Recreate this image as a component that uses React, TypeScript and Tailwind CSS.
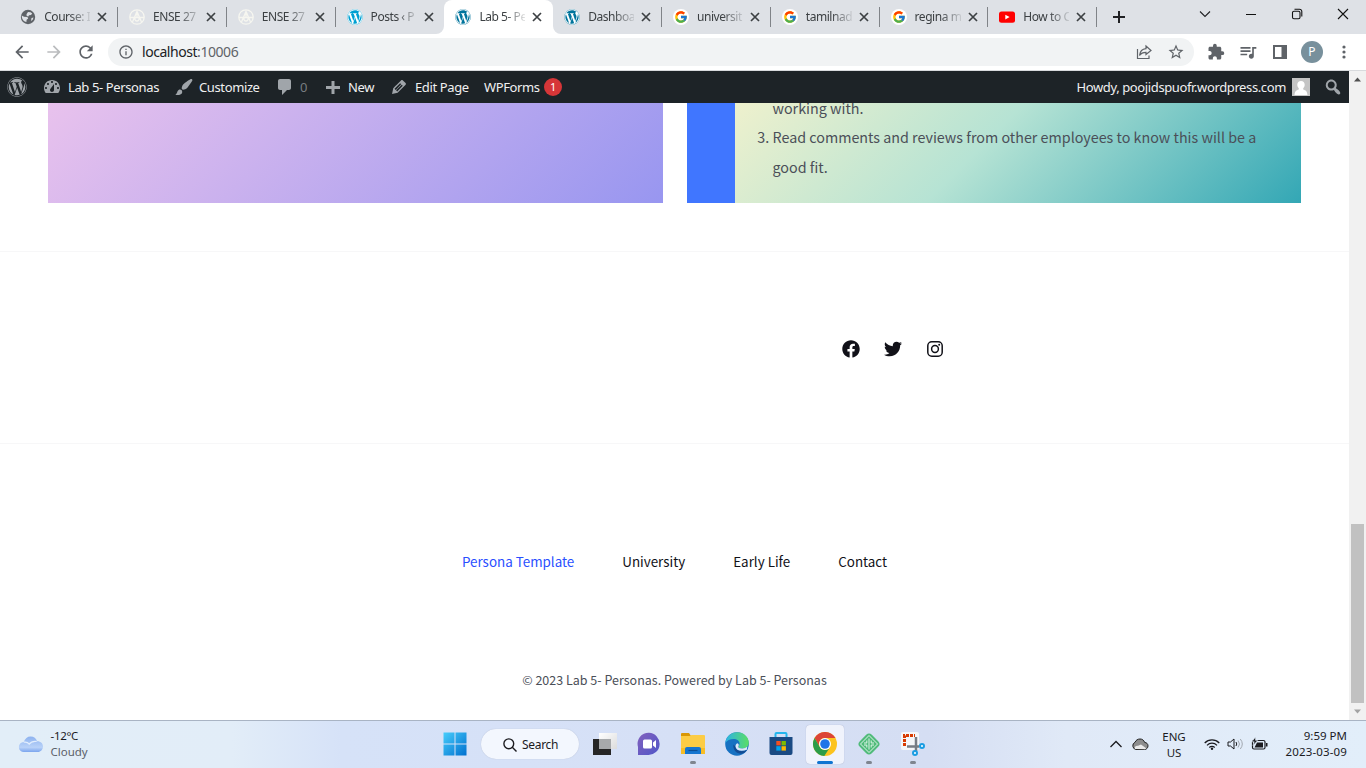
import type { ReactNode } from "react";
import { FaFacebook, FaTwitter, FaWordpress } from "react-icons/fa";
import { FcGoogle } from "react-icons/fc";
import { MdArrowBack, MdArrowForward, MdExtension, MdOutlineInfo, MdQueueMusic, MdRefresh, MdStarBorder } from "react-icons/md";

const uiFont = "font-['Noto_Sans','Open_Sans',sans-serif]";
const pageFont = "font-['Noto_Sans_CJK_SC',sans-serif]";

/* ---------- browser tabs ---------- */

function Globe() {
  return (
    <svg viewBox="0 0 16 16" className="size-4">
      <circle cx="8" cy="8" r="7.2" fill="#5f6368" />
      <path d="M1.8 6.5 4 7.700l3.400.4.8 1.500-1.600 1.100-.2 2.300-1.700-.5C2.800 11.500 1.500 9 1.800 6.500zM8 3l2.600.2 1.600 1.300-1.200 1.500-2 .2-.7 1.200-1.600-.5-.2-1.700zM11.500 9l2-.6-.8 2.400-1.700 1.200z" fill="#dee1e6" />
    </svg>
  );
}

function Moodle() {
  return (
    <svg viewBox="0 0 16 16" className="size-4" fill="none" stroke="#f6f6f0" strokeWidth="1.3">
      <circle cx="8" cy="8" r="7.2" />
      <path d="M3.500 13 8 2.500 12.500 13M1 8.500h14M8 2.500v6M5.700 8.500a2.300 3.500 0 0 0 4.600 0" />
    </svg>
  );
}

function WpIcon({ light }: { light?: boolean }) {
  return (
    <span className="flex size-4 items-center justify-center rounded-full bg-white">
      <FaWordpress className={light ? "size-4 text-[#00a0d2]" : "size-4 text-[#00749c]"} />
    </span>
  );
}

function GoogleIcon() {
  return (
    <span className="flex size-4 items-center justify-center rounded-full bg-white">
      <FcGoogle className="size-[14px]" />
    </span>
  );
}

function YoutubeIcon() {
  return (
    <svg viewBox="0 0 16 16" className="size-4">
      <rect y="2.500" width="16" height="11.300" rx="2.500" fill="#f00" />
      <path d="m6.300 5.700 4.300 2.400-4.300 2.400z" fill="#fff" />
    </svg>
  );
}

function Cross() {
  return (
    <svg viewBox="0 0 10 10" className="size-[10px]" stroke="#3c4043" strokeWidth="1.700">
      <path d="m1 1 8 8M9 1 1 9" />
    </svg>
  );
}

type Tab = { title: string; icon: ReactNode; active?: boolean; sep?: boolean };

const tabs: Tab[] = [
  { title: "Course: I", icon: <Globe />, sep: true },
  { title: "ENSE 27", icon: <Moodle />, sep: true },
  { title: "ENSE 27", icon: <Moodle />, sep: true },
  { title: "Posts ‹ P", icon: <WpIcon light /> },
  { title: "Lab 5- Pe", icon: <WpIcon />, active: true },
  { title: "Dashboa", icon: <WpIcon />, sep: true },
  { title: "universit", icon: <GoogleIcon />, sep: true },
  { title: "tamilnad", icon: <GoogleIcon />, sep: true },
  { title: "regina m", icon: <GoogleIcon />, sep: true },
  { title: "How to C", icon: <YoutubeIcon />, sep: true },
];

function TabStrip() {
  return (
    <div className="flex h-[34px] bg-[#dee1e6] pl-[9.2px]">
      {tabs.map((t, i) => (
        <div key={i} className={`relative flex h-[34px] w-[108.8px] shrink-0 items-center pl-[11px] ${t.active ? "rounded-t-lg bg-white" : ""}`}>
          {t.active && (
            <>
              <svg viewBox="0 0 8 8" className="absolute bottom-0 -left-2 size-2" fill="#fff">
                <path d="M8 0v8H0a8 8 0 0 0 8-8z" />
              </svg>
              <svg viewBox="0 0 8 8" className="absolute -right-2 bottom-0 size-2" fill="#fff">
                <path d="M0 0v8h8a8 8 0 0 1-8-8z" />
              </svg>
            </>
          )}
          {t.icon}
          <span className="ml-2 w-[46px] text-[12px] tracking-[-0.45px] whitespace-nowrap text-[#3c4043] [mask-image:linear-gradient(to_right,black_55%,#0002_100%)]">
            {t.title}
          </span>
          <span className="ml-[7px]">
            <Cross />
          </span>
          {t.sep && <span className="absolute top-[7px] right-0 h-5 w-px bg-[#808388]" />}
        </div>
      ))}
      <svg viewBox="0 0 12 12" className="mt-[11px] ml-[16px] size-3" stroke="#202124" strokeWidth="2">
        <path d="M6 0v12M0 6h12" />
      </svg>
      <div className="ml-auto flex items-start gap-[34px] pt-[8px] pr-[17px]">
        <svg viewBox="0 0 12 12" className="size-3" fill="none" stroke="#202124" strokeWidth="1.1">
          <path d="m1 3.500 5 5 5-5" />
        </svg>
        <svg viewBox="0 0 12 12" className="size-3" stroke="#111" strokeWidth="1">
          <path d="M1 6.500h10" />
        </svg>
        <svg viewBox="0 0 12 12" className="size-3" fill="none" stroke="#111" strokeWidth="1.1">
          <rect x="1.500" y="3.300" width="7.500" height="7.500" rx="1.500" />
          <path d="M3.500 1.300H8.500a2.300 2.300 0 0 1 2.300 2.300v5" />
        </svg>
        <svg viewBox="0 0 12 12" className="size-3" stroke="#111" strokeWidth="1.1">
          <path d="m1 1 10 10M11 1 1 11" />
        </svg>
      </div>
    </div>
  );
}

function Toolbar() {
  return (
    <div className="flex h-[37px] items-center border-b border-[#d8dadd] bg-white pl-[12px]">
      <MdArrowBack className="size-5 text-[#5f6368]" />
      <MdArrowForward className="ml-3 size-5 text-[#babcbe]" />
      <MdRefresh className="ml-3 size-5 text-[#5f6368]" />
      <div className="ml-3 flex h-7 w-[1086px] items-center rounded-full bg-[#f1f3f4] pl-[10px]">
        <MdOutlineInfo className="size-4 text-[#5f6368]" />
        <span className="ml-2 pb-px text-[14px] leading-5 tracking-[-0.45px] text-[#202124]">
          localhost<span className="text-[#5f6368]">:10006</span>
        </span>
        <svg viewBox="0 0 16 16" className="ml-auto size-4" fill="none" stroke="#5f6368" strokeWidth="1.2">
          <path d="M1.500 5v9.500H13v-3M10 2l5 4.500-5 4V8.300C7 8.300 5 9 3.500 11.500 4 7.500 6.500 5 10 4.700z" />
        </svg>
        <MdStarBorder className="mr-[9px] ml-[15px] size-[18px] text-[#5f6368]" />
      </div>
      <MdExtension className="ml-[13px] size-[18px] text-[#5f6368]" />
      <MdQueueMusic className="ml-[13px] size-5 text-[#5f6368]" />
      <svg viewBox="0 0 14 14" className="ml-[15px] size-[14px]">
        <path d="M0 0h14v14H0zM2 2v10h6.500V2z" fillRule="evenodd" fill="#5f6368" />
      </svg>
      <span className="ml-[14px] flex size-[22px] items-center justify-center rounded-full bg-[#78909c] text-[12px] text-white">P</span>
      <svg viewBox="0 0 4 14" className="ml-[19px] h-[14px] w-1" fill="#5f6368">
        <circle cx="2" cy="2" r="1.600" />
        <circle cx="2" cy="7" r="1.600" />
        <circle cx="2" cy="12" r="1.600" />
      </svg>
    </div>
  );
}

/* ---------- WordPress admin bar ---------- */

const dash = {
  dashboard:
    "M3.760 16h12.480c1.100-1.370 1.760-3.110 1.760-5 0-4.420-3.580-8-8-8s-8 3.580-8 8c0 1.890.66 3.630 1.760 5zM10 4c.55 0 1 .45 1 1s-.45 1-1 1-1-.45-1-1 .45-1 1-1zM6 6c.55 0 1 .45 1 1s-.45 1-1 1-1-.45-1-1 .45-1 1-1zm8 0c.55 0 1 .45 1 1s-.45 1-1 1-1-.45-1-1 .45-1 1-1zm-5.370 5.550L12 7v6c0 1.100-.9 2-2 2s-2-.9-2-2c0-.57.24-1.080.63-1.450zM4 10c.55 0 1 .45 1 1s-.45 1-1 1-1-.45-1-1 .45-1 1-1zm12 0c.55 0 1 .45 1 1s-.45 1-1 1-1-.45-1-1 .45-1 1-1z",
  brush:
    "M18.330 3.570s.27-.8-.31-1.360c-.53-.52-1.220-.24-1.220-.24-.61.3-5.760 3.470-7.670 5.570-.86.96-2.060 3.790-1.090 4.820.92.98 3.960-.17 4.790-1 2.060-2.060 5.210-7.170 5.500-7.790zM1.400 17.650c2.370-1.560 1.460-3.410 3.230-4.640.93-.65 2.220-.62 3.080.29.63.67.8 2.570-.16 3.460-1.570 1.450-4 1.550-6.150.89z",
  comment: "M5 2h9c1.100 0 2 .9 2 2v7c0 1.100-.9 2-2 2h-2l-5 5v-5H5c-1.100 0-2-.9-2-2V4c0-1.100.9-2 2-2z",
  plus: "M17 9v3h-5.500v5h-3v-5H3V9h5.500V4h3v5z",
  edit: "M13.890 3.390l2.710 2.720c.46.46.42 1.240.03 1.640l-8.010 8.020-5.560 1.160 1.160-5.580s7.600-7.630 7.990-8.030c.39-.39 1.220-.39 1.680.07zm-2.730 2.790l-5.590 5.610 1.110 1.110 5.540-5.650zm-2.970 8.230l5.580-5.600-1.070-1.080-5.590 5.600z",
  search:
    "M12.140 4.180c1.870 1.870 2.110 4.750.72 6.890.12.1.22.21.36.31.2.16.47.36.81.59.34.24.56.39.66.47.42.31.73.57.94.78.32.32.6.65.84 1 .25.35.44.69.59 1.040.14.35.21.68.18 1-.02.32-.14.59-.36.81s-.49.34-.81.36c-.31.02-.65-.04-.99-.19-.35-.14-.7-.34-1.040-.59-.35-.24-.68-.52-1-.84-.21-.21-.47-.52-.77-.93-.1-.13-.25-.35-.47-.66-.22-.32-.4-.57-.56-.78-.16-.2-.29-.35-.44-.5-2.070 1.090-4.690.76-6.440-.98-2.140-2.150-2.140-5.640 0-7.780 2.150-2.150 5.630-2.150 7.780 0zm-1.410 6.360c1.360-1.370 1.360-3.580 0-4.950-1.370-1.370-3.590-1.370-4.950 0-1.370 1.370-1.370 3.580 0 4.950 1.360 1.370 3.580 1.370 4.950 0z",
};

function Dashicon({ d }: { d: string }) {
  return (
    <svg viewBox="0 0 20 20" className="size-5 shrink-0" fill="#a0a5aa">
      <path d={d} />
    </svg>
  );
}

function AdminBar() {
  return (
    <div className="flex h-8 w-[1349px] items-center bg-[#1d2327] pl-[7px] text-[13px] leading-5 tracking-[-0.38px] whitespace-nowrap text-[#f0f0f1]">
      <FaWordpress className="size-5 text-[#a0a5aa]" />
      <div className="ml-[15px] flex w-[132px] items-center gap-[6px]">
        <Dashicon d={dash.dashboard} />
        <span>Lab 5- Personas</span>
      </div>
      <div className="flex w-[101px] items-center gap-[5px]">
        <Dashicon d={dash.brush} />
        <span>Customize</span>
      </div>
      <div className="flex w-[48px] items-center gap-[5px] text-[#a0a5aa]/70">
        <Dashicon d={dash.comment} />
        <span>0</span>
      </div>
      <div className="flex w-[66px] items-center gap-[5px]">
        <Dashicon d={dash.plus} />
        <span>New</span>
      </div>
      <div className="flex w-[95px] items-center gap-[6px]">
        <Dashicon d={dash.edit} />
        <span>Edit Page</span>
      </div>
      <span className="w-[60px]">WPForms</span>
      <span className="flex size-[18px] items-center justify-center rounded-full bg-[#d63638] text-[11px] text-white">1</span>
      <span className="ml-auto">Howdy, poojidspuofr.wordpress.com</span>
      <svg viewBox="0 0 18 18" className="ml-[6px] size-[18px]">
        <path d="M0 0h18v18H0z" fill="#c4c4c4" />
        <path d="M9 3c2.300 0 3.700 1.500 3.700 3.700 0 1.500-.6 2.800-1.500 3.500v1.300c2.500.7 4 1.800 4.300 5.500h-13c.3-3.700 1.800-4.800 4.300-5.500v-1.300C5.900 9.500 5.300 8.200 5.300 6.700 5.300 4.500 6.700 3 9 3z" fill="#fff" />
      </svg>
      <span className="mr-[6px] ml-[13px]">
        <Dashicon d={dash.search} />
      </span>
    </div>
  );
}

/* ---------- page ---------- */

function Page() {
  return (
    <main className={`h-[617px] w-[1349px] overflow-hidden bg-white ${pageFont}`}>
      <section className="flex h-[148px] items-end gap-6 overflow-hidden px-12 pb-12">
        <div className="h-[300px] w-[615px] bg-[linear-gradient(135deg,rgb(255,206,236)_0%,rgb(152,150,240)_100%)]" />
        <div className="flex h-[186px] w-[614px] bg-[#4076ff] pl-12">
          <div className="flex flex-1 flex-col justify-end bg-[linear-gradient(135deg,rgb(255,245,203)_0%,rgb(182,227,212)_50%,rgb(51,167,181)_100%)] pb-[21px] pl-[37.5px] text-[14.32px] leading-[30px] whitespace-nowrap text-[#4b4f58]">
            <p className="leading-[29px]">working with.</p>
            <ol start={3} className="list-decimal">
              <li>
                Read comments and reviews from other employees to know this will be a
                <br />
                good fit.
              </li>
            </ol>
          </div>
        </div>
      </section>
      <section className="flex h-[192px] items-center border-t border-[#f7f7f8] pl-[842px] text-[#111118]">
        <FaFacebook className="mt-[3px] size-[18px]" />
        <FaTwitter className="mt-[3px] ml-6 size-[18px]" />
        <svg viewBox="0 0 18 18" className="mt-[3px] ml-6 size-[18px]" fill="none" stroke="currentColor" strokeWidth="1.500">
          <rect x="1.800" y="1.800" width="14.400" height="14.400" rx="4" />
          <circle cx="9" cy="9" r="3.400" />
          <circle cx="13.200" cy="4.800" r="1" fill="currentColor" stroke="none" />
        </svg>
      </section>
      <footer className="flex flex-col items-center border-t border-[#f7f7f8] pt-[105px]">
        <nav className="flex gap-12 text-[13.4px] leading-6 text-[#111118]">
          <a className="text-[#2a4fff]">Persona Template</a>
          <a>University</a>
          <a>Early Life</a>
          <a>Contact</a>
        </nav>
        <p className="mt-[95px] text-[12.5px] leading-6 text-[#4b4f58]">© 2023 Lab 5- Personas. Powered by Lab 5- Personas</p>
      </footer>
    </main>
  );
}

function Scrollbar() {
  return (
    <div className="flex w-[17px] flex-col items-center justify-between bg-[#f1f1f1]">
      <svg viewBox="0 0 17 17" className="size-[17px]">
        <path d="m5 10.500 3.500-4 3.500 4z" fill="#505050" />
      </svg>
      <div className="flex flex-col items-center">
        <div className="h-[179px] w-[13px] bg-[#c1c1c1]" />
        <svg viewBox="0 0 17 17" className="size-[17px]">
          <path d="m5 6.500 3.500 4 3.500-4z" fill="#a3a3a3" />
        </svg>
      </div>
    </div>
  );
}

/* ---------- taskbar ---------- */

function Slot({ children, state }: { children: ReactNode; state?: "open" | "active" }) {
  return (
    <div className={`relative flex h-[39px] w-[38px] items-center justify-center rounded ${state === "active" ? "bg-[#f0f3fc] shadow-[0_0_1px_#9aa5c0]" : ""}`}>
      {children}
      {state === "open" && <span className="absolute bottom-0 h-[3px] w-[6px] rounded-full bg-[#7f858f]" />}
      {state === "active" && <span className="absolute bottom-0 h-[3px] w-4 rounded-full bg-[#0f74d1]" />}
    </div>
  );
}

function Taskbar() {
  return (
    <div className="flex h-12 items-center border-t border-[#a9b4c4] bg-[linear-gradient(to_right,#e2eef8_0%,#e2edf8_17%,#d6e2f8_25%,#d6e0f6_50%,#d5def3_68%,#e0e9f7_78%,#e2eefa_100%)] pb-px text-[11.5px] text-[#1b1b1f]">
      <div className="flex w-[436px] items-center pl-[18px]">
        <svg viewBox="0 0 26 18" className="h-[18px] w-[26px]">
          <defs>
            <linearGradient id="cloud" x1="0" y1="0" x2="0" y2="1">
              <stop offset="0" stopColor="#8db2ef" />
              <stop offset=".7" stopColor="#b9d2f8" />
              <stop offset="1" stopColor="#7ba5ee" />
            </linearGradient>
          </defs>
          <path d="M6 17a5 5 0 0 1-.3-10C7 3.500 9.500 1.500 12.500 1.500c3.500 0 5.700 2 6.500 4.700 3.500-.2 6 2.300 6 5.300S22.500 17 20 17z" fill="url(#cloud)" />
          <path d="M5.700 7.200c2.500-.4 4.500.5 5.500 2 1.500-2 4-3.300 7.500-2.700" fill="none" stroke="#e1edfd" strokeWidth="1.200" />
        </svg>
        <div className="ml-[6.5px] flex flex-col leading-4">
          <span className="tracking-[-0.3px]">-12°C</span>
          <span className="text-[#5c6069]">Cloudy</span>
        </div>
      </div>
      <div className="flex items-center">
        <Slot>
          <svg viewBox="0 0 24 24" className="size-6">
            <defs>
              <linearGradient id="win" x1="0" y1="0" x2="1" y2="1">
                <stop offset="0" stopColor="#48cdfb" />
                <stop offset="1" stopColor="#0070cf" />
              </linearGradient>
            </defs>
            <path d="M.5.5h11v11H.5zM12.500.5h11v11h-11zM.5 12.500h11v11H.5zM12.500 12.500h11v11h-11z" fill="url(#win)" />
          </svg>
        </Slot>
        <div className="ml-[7px] flex h-[30px] w-[98px] items-center rounded-full bg-[#f3f7fe] pl-[22px] shadow-[0_0_1px_#aab4cc]">
          <svg viewBox="0 0 14 14" className="mt-px size-[14px]" fill="none" stroke="#1b1b1f" strokeWidth="1.400">
            <circle cx="5.800" cy="5.800" r="4.900" />
            <path d="m9.300 9.300 4.200 4.200" />
          </svg>
          <span className="ml-[5px] pt-0.5 text-[12px] tracking-[-0.3px]">Search</span>
        </div>
        <div className="ml-[7px] flex gap-[6px]">
          <Slot>
            <svg viewBox="0 0 24 24" className="size-6">
              <defs>
                <linearGradient id="desk" x1="0" y1="0" x2="1" y2="1">
                  <stop offset="0" stopColor="#ffffff" />
                  <stop offset="1" stopColor="#dcdcdc" />
                </linearGradient>
              </defs>
              <path d="M0 7h18v16H0z" fill="#262626" />
              <path d="M6 1h18v16H6z" fill="url(#desk)" />
              <path d="M6 7h12v10H6z" fill="#a7a9ab" />
            </svg>
          </Slot>
          <Slot>
            <svg viewBox="0 0 24 24" className="size-6">
              <defs>
                <linearGradient id="chat" x1="0" y1="0" x2="1" y2="1">
                  <stop offset="0" stopColor="#8361bd" />
                  <stop offset="1" stopColor="#4f56c8" />
                </linearGradient>
              </defs>
              <path d="M12 .8a11 11 0 1 1-1 22.200H1v-8A11 11 0 0 1 12 .8z" fill="url(#chat)" />
              <rect x="6" y="7.500" width="9" height="9" rx="1.500" fill="#fff" />
              <path d="M16 10.500 19 8v8l-3-2.500z" fill="#fff" />
            </svg>
          </Slot>
          <Slot state="open">
            <svg viewBox="0 0 24 24" className="size-6">
              <path d="M0 2q0-1 1-1h7l2 3H0z" fill="#d99706" />
              <path d="M0 4h9l1.500-1H23q1 0 1 1v18H0z" fill="#fccc45" />
              <path d="M0 16h24v6H0z" fill="#f8bd25" />
              <path d="M4 22v-5q0-2 2-2h12q2 0 2 2v5z" fill="#1676d0" />
              <path d="M7.500 18.500h9" stroke="#0c4f94" strokeWidth="1.200" />
            </svg>
          </Slot>
          <Slot>
            <svg viewBox="0 0 24 24" className="size-6">
              <defs>
                <linearGradient id="edge" x1="0" y1="0" x2="1" y2="0">
                  <stop offset="0" stopColor="#2db2e6" />
                  <stop offset="1" stopColor="#5ade64" />
                </linearGradient>
              </defs>
              <circle cx="12" cy="12" r="11.800" fill="#1671c2" />
              <path d="M.3 11C1 4.500 6 .2 12 .2c7 0 11.800 5 11.800 10.300 0 4-3 6-6.500 6-3 0-4.300-1-4-2 .8-1 1.300-1.800 1.300-3 0-2.500-2.600-4.500-6-4.500C5 7 2 8.500.3 11z" fill="url(#edge)" />
              <path d="M8.500 12.500c-1 5 3 9.500 8 9.300 2-.3 4.500-2 5.500-4-6 3-11 .5-11.500-3z" fill="#124b93" />
              <path d="M13.300 14.500c-.3 1 1 2 4 2 2 0 3.800-.7 5-1.900l-.4 3.200c-6 2.200-11 .7-11.400-3.300 0-1.500.7-2.800 1.800-3.200 1.500.2 2 2 1 3.200z" fill="#dce6f7" />
            </svg>
          </Slot>
          <Slot>
            <svg viewBox="0 0 24 24" className="size-6">
              <path d="M6.500 6V2q0-1 1-1h9q1 0 1 1v4" fill="none" stroke="#24b6ed" strokeWidth="2" />
              <path d="M.5 5h23v16q0 2-2 2h-19q-2 0-2-2z" fill="#1a4a83" />
              <path d="M7.300 9h4.400v4.400H7.300z" fill="#f25022" />
              <path d="M12.500 9h4.400v4.400h-4.400z" fill="#7fba00" />
              <path d="M7.300 14.200h4.400v4.400H7.300z" fill="#00a4ef" />
              <path d="M12.500 14.200h4.400v4.400h-4.400z" fill="#ffb900" />
            </svg>
          </Slot>
          <Slot state="active">
            <svg viewBox="0 0 24 24" className="size-6">
              <circle cx="12" cy="12" r="12" fill="#fcc31e" />
              <path d="M1.600 6A12 12 0 0 1 22.400 6H12a6 6 0 0 0-5.200 9z" fill="#dc4437" />
              <path d="M1.600 6a12 12 0 0 0 9.700 18l5.900-9a6 6 0 0 1-10.400 0z" fill="#2c9c48" />
              <circle cx="12" cy="12" r="6" fill="#fff" />
              <circle cx="12" cy="12" r="4.800" fill="#1f74e8" />
            </svg>
          </Slot>
          <Slot state="open">
            <svg viewBox="0 0 24 24" className="size-6" fill="none" stroke="#dff5e8" strokeWidth="1">
              <rect x="3.500" y="3.500" width="17" height="17" rx="4" transform="rotate(45 12 12)" fill="#51bb7b" stroke="none" />
              <path d="M12 3.500 20.500 12 12 20.500 3.500 12z" />
              <path d="M12 6.500v11M9.800 8.500v2.500H7M14.200 8.500v2.500H17M9.800 15.500V13H7M14.200 15.500V13H17" />
            </svg>
          </Slot>
          <Slot state="open">
            <svg viewBox="0 0 24 24" className="size-6">
              <rect width="18" height="18" rx="2" fill="#f5f6f8" />
              <path d="M3.500 14V3.500H14" fill="none" stroke="#d83b01" strokeWidth="3" strokeDasharray="3 1" />
              <path d="M15 5v10M6 14.500h12M15 14v5" stroke="#777c84" strokeWidth="2.500" fill="none" />
              <circle cx="21" cy="14" r="2" fill="#fff" stroke="#1b9de2" strokeWidth="2" />
              <circle cx="14" cy="21" r="2" fill="#fff" stroke="#1b9de2" strokeWidth="2" />
            </svg>
          </Slot>
        </div>
      </div>
      <div className="ml-auto flex items-center pr-[19px]">
        <svg viewBox="0 0 12 8" className="h-2 w-3" fill="none" stroke="#1b1b1f" strokeWidth="1.300">
          <path d="m.5 7 5.500-5.500L11.500 7" />
        </svg>
        <svg viewBox="0 0 18 14" className="ml-[9px] h-[14px] w-[18px]">
          <path d="M5 12.500A3.800 3.800 0 0 1 4 5.300C5 3 6.800 2 9 2s3.800 1 4.700 3.500c2 0 3.300 1.500 3.300 3.400s-1.500 3.600-3.500 3.600z" fill="#8d8d8d" stroke="#222" />
          <path d="M4 12c-1-2 .5-3.500 3-3.300L10 7.500l5.500 4-2 .8z" fill="#e9e9e9" />
        </svg>
        <div className="ml-[12px] flex w-[26px] flex-col items-center pt-0.5 leading-4">
          <span>ENG</span>
          <span>US</span>
        </div>
        <svg viewBox="0 0 16 12" className="ml-[17px] h-3 w-4" fill="none" stroke="#1b1b1f" strokeWidth="1.200">
          <path d="M.7 5a10.300 10.300 0 0 1 14.600 0M3 7.300a7 7 0 0 1 10 0M5.300 9.500a3.800 3.800 0 0 1 5.400 0" />
          <circle cx="8" cy="10.700" r="1.200" fill="#1b1b1f" stroke="none" />
        </svg>
        <svg viewBox="0 0 17 14" className="ml-[7px] h-[14px] w-[17px]" fill="none" stroke="#1b1b1f">
          <path d="M1 5v4h2.500L7 12V2L3.500 5zM9 5q1.500 2 0 4" />
          <path d="M11 3.500q3 3.500 0 7M13.300 2q4 5 0 10" stroke="#a2a8b0" />
        </svg>
        <svg viewBox="0 0 17 14" className="ml-[7px] h-[14px] w-[17px]">
          <rect x="1.500" y="3.500" width="12.500" height="8.500" rx="1.500" fill="none" stroke="#1b1b1f" strokeWidth="1.200" />
          <path d="M3.500 10.500 6 5.500h6v5zM15 6h1.500v3.500H15z" fill="#1b1b1f" />
          <path d="M4.500 0 .8 4.800h2.400L2 8.500l4.700-5H4.600z" fill="#1b1b1f" stroke="#e2eefa" strokeWidth=".6" />
        </svg>
        <div className="ml-[15px] flex w-[64px] flex-col items-end leading-4 whitespace-nowrap">
          <span>9:59 PM</span>
          <span className="tracking-[0.15px]">2023-03-09</span>
        </div>
      </div>
    </div>
  );
}

export default function App() {
  return (
    <div className={`flex h-[768px] w-[1366px] flex-col overflow-hidden bg-white ${uiFont}`}>
      <TabStrip />
      <Toolbar />
      <div className="flex h-[649px]">
        <div>
          <AdminBar />
          <Page />
        </div>
        <Scrollbar />
      </div>
      <Taskbar />
    </div>
  );
}
